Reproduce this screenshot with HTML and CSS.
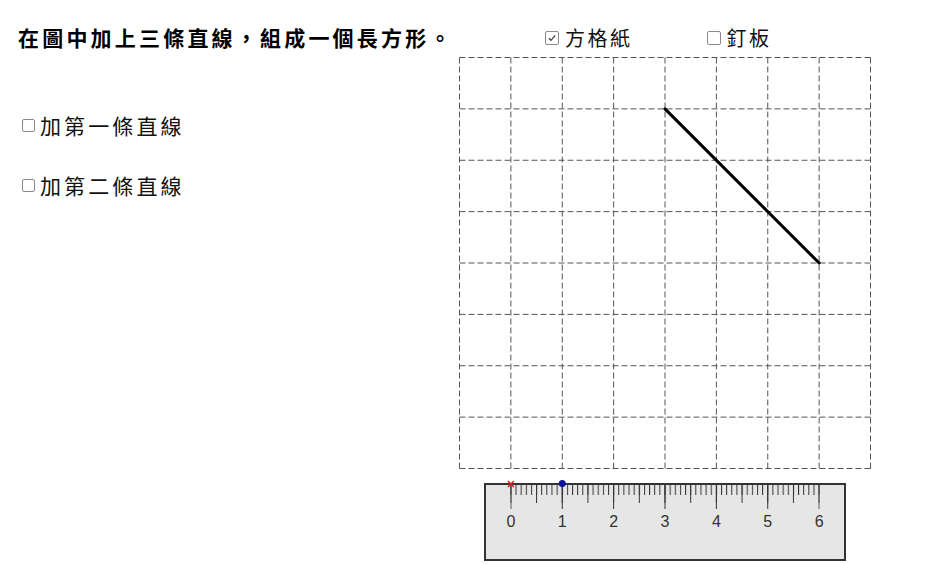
FILE: index.html
```html
<!DOCTYPE html>
<html lang="zh-Hant">
<head>
<meta charset="utf-8">
<title>加上三條直線</title>
<link rel="stylesheet" href="styles.css">
</head>
<body>
<main class="app">
  <section class="side">
    <h1 class="title">在圖中加上三條直線，組成一個長方形。</h1>
    <label class="opt opt-first"><span class="box"></span>加第一條直線</label>
    <label class="opt opt-second"><span class="box"></span>加第二條直線</label>
  </section>
  <section class="board">
    <div class="toggles">
      <label class="opt toggle"><span class="box checked"><svg viewBox="0 0 12 12" width="10" height="10"><path d="M2.2 6.2 L4.8 8.8 L9.8 2.8" fill="none" stroke="#444" stroke-width="1.6"/></svg></span>方格紙</label>
      <label class="opt toggle"><span class="box"></span>釘板</label>
    </div>
    <svg class="canvas" viewBox="450 50 430 514" width="430" height="514">
      <defs>
        <pattern id="tSmall" patternUnits="userSpaceOnUse" x="510.375" y="484" width="5.1375" height="11">
          <rect x="0" y="0" width="1" height="11" fill="#333"/>
        </pattern>
        <pattern id="tMid" patternUnits="userSpaceOnUse" x="510.375" y="484" width="25.6875" height="19">
          <rect x="0" y="0" width="1" height="19" fill="#333"/>
        </pattern>
        <pattern id="tLong" patternUnits="userSpaceOnUse" x="510.375" y="484" width="51.375" height="25">
          <rect x="0" y="0" width="1" height="25" fill="#333"/>
        </pattern>
      </defs>
      <g class="grid">
        <path d="M459.5 57.5 V468.5 M510.875 57.5 V468.5 M562.25 57.5 V468.5 M613.625 57.5 V468.5 M665 57.5 V468.5 M716.375 57.5 V468.5 M767.75 57.5 V468.5 M819.125 57.5 V468.5 M870.5 57.5 V468.5"/>
        <path d="M459.5 57.5 H870.5 M459.5 108.875 H870.5 M459.5 160.25 H870.5 M459.5 211.625 H870.5 M459.5 263 H870.5 M459.5 314.375 H870.5 M459.5 365.75 H870.5 M459.5 417.125 H870.5 M459.5 468.5 H870.5"/>
      </g>
      <line class="seg" x1="665" y1="108.875" x2="819.125" y2="263"/>
      <g class="ruler">
        <rect class="body" x="485" y="484" width="360" height="76"/>
        <rect x="510.375" y="484" width="309.25" height="11" fill="url(#tSmall)"/>
        <rect x="510.375" y="484" width="309.25" height="19" fill="url(#tMid)"/>
        <rect x="510.375" y="484" width="309.25" height="25" fill="url(#tLong)"/>
        <g class="nums">
          <text x="510.875" y="526.5">0</text>
          <text x="562.25" y="526.5">1</text>
          <text x="613.625" y="526.5">2</text>
          <text x="665" y="526.5">3</text>
          <text x="716.375" y="526.5">4</text>
          <text x="767.75" y="526.5">5</text>
          <text x="819.125" y="526.5">6</text>
        </g>
        <path class="cross" d="M507.9 481 L513.9 487 M513.9 481 L507.9 487"/>
        <circle class="knob" cx="562.25" cy="483.5" r="3.5"/>
      </g>
    </svg>
  </section>
</main>
</body>
</html>
```
FILE: styles.css
```css
html, body {
  margin: 0;
  padding: 0;
  background: #ffffff;
}

body {
  width: 939px;
  height: 564px;
  overflow: hidden;
  font-family: "Noto Sans CJK TC", "Noto Sans CJK SC", sans-serif;
  color: #000;
}

.app {
  display: grid;
  grid-template-columns: 450px 1fr;
  height: 564px;
}

.side {
  display: flex;
  flex-direction: column;
  align-items: flex-start;
}

.title {
  margin: 25px 0 0 18px;
  font-size: 21px;
  line-height: 24px;
  font-weight: 700;
  letter-spacing: 3.2px;
  white-space: nowrap;
}

.opt {
  display: flex;
  align-items: center;
  font-size: 21px;
  line-height: 24px;
  letter-spacing: 3.1px;
  white-space: nowrap;
  color: #111;
}

.opt-first {
  margin: 64px 0 0 22px;
}

.opt-second {
  margin: 36px 0 0 22px;
}

.box {
  box-sizing: border-box;
  width: 13px;
  height: 13px;
  border: 1.5px solid #8a8a8a;
  border-radius: 2px;
  margin-right: 5px;
  display: flex;
  align-items: center;
  justify-content: center;
  flex: none;
}

.box svg {
  display: block;
}

.board {
  display: flex;
  flex-direction: column;
}

.toggles {
  display: flex;
  gap: 74px;
  height: 50px;
  box-sizing: border-box;
  padding: 26px 0 0 95px;
}

.toggle {
  font-size: 20px;
  letter-spacing: 2.5px;
}

.toggle .box {
  width: 14px;
  height: 14px;
  margin-right: 6px;
}

.canvas {
  display: block;
}

.grid path {
  fill: none;
  stroke: #555;
  stroke-width: 1;
  stroke-dasharray: 6 3;
}

.seg {
  stroke: #000;
  stroke-width: 3;
  stroke-linecap: round;
}

.ruler .body {
  fill: #e6e6e6;
  stroke: #333;
  stroke-width: 2;
}

.nums text {
  font-family: "Liberation Sans", Arial, sans-serif;
  font-size: 16px;
  fill: #333;
  text-anchor: middle;
}

.cross {
  stroke: #dd2222;
  stroke-width: 1.5;
  fill: none;
}

.knob {
  fill: #0a14a0;
}
```
